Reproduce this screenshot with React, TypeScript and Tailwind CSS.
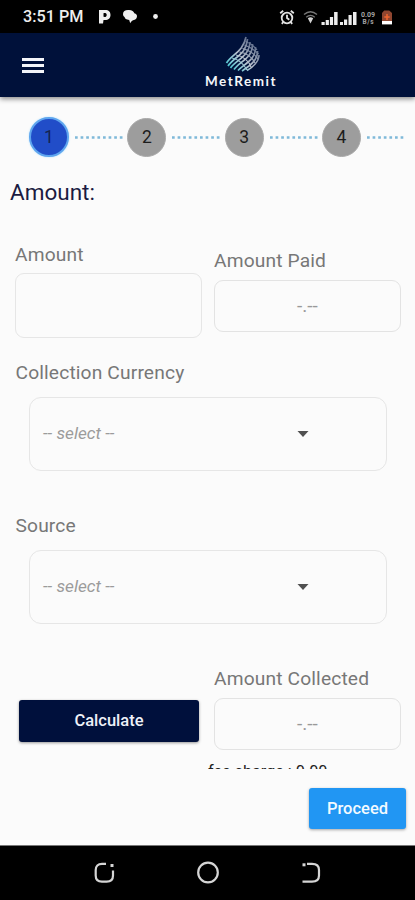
import React from "react";

const steps = [1, 2, 3, 4];

const StatusBar: React.FC = () => {
  return (
    <div className="h-[33px] shrink-0 bg-black text-[#eeeeee] flex items-center justify-between pl-[23px] pr-[21px]">
      <div className="flex items-center">
        <span className="w-[62px] mt-[2px] text-[16.200px] leading-none font-medium whitespace-nowrap">3:51 PM</span>
        <svg width="76" height="18" viewBox="0 0 76 18" className="ml-[11px] mt-px" fill="#f0f0f0">
          <path fillRule="evenodd" d="M3 2h6c4 0 5.500 2 5.500 5s-2 5-5.500 5H7.500l-.5 3.500H3zM7.500 5.200v3.600c2 .4 3.200-.3 3.200-1.900s-1.300-2-3.200-1.700z" />
          <path d="M27 6c0-2.500 2-4 5-4h1c3 0 4.800 1.400 5.300 3.200 2 .5 2.700 1.500 2.700 3 0 2-1.300 3.300-3 3.800-1.600.4-2.500 1-3.800 3.300l-1-3.300C30 11.500 29 10.500 28.700 9.200 27.700 8.500 27 7.500 27 6z" />
          <circle cx="59.500" cy="8.500" r="2.400" />
        </svg>
      </div>
      <svg width="116" height="20" viewBox="0 0 116 20" className="mt-[2px]">
        {/* alarm */}
        <g fill="none" stroke="#e4e4e4" strokeWidth="1.800">
          <circle cx="9" cy="10" r="5.300" />
          <path d="M9 6.800V10l2.300 1.800M2.200 5.300l3-2.600M12.800 2.700l3 2.600M5.200 14.200l-1.400 1.600M12.800 14.200l1.400 1.600" />
        </g>
        {/* wifi */}
        <g fill="none" stroke="#777777" strokeWidth="1.300">
          <path d="M26 6.600c4-3.500 9-3.500 13 0M28.200 9.200c2.700-2.300 5.900-2.300 8.600 0" />
        </g>
        <path d="M29.800 10.300c1.800-1.400 3.600-1.400 5.400 0L32.500 15.600z" fill="#d2d2d2" />
        {/* both sims */}
        <g fill="#ededed">
          <path d="M43.500 14h3.200v3h-3.200zM47.700 12h3.200v5h-3.200zM51.900 9h3.200v8h-3.200zM56.100 4h3.500v13h-3.500z" />
          <path d="M62 14h3v3h-3zM66 11.500h3.200V17H66zM70.500 7h3.200v10h-3.200zM75 4h3.500v13H75z" />
        </g>
        <text x="83" y="8.500" fill="#a5a5a5" fontSize="7" fontWeight="700" textLength="14">0.09</text>
        <text x="84.500" y="16" fill="#a5a5a5" fontSize="6.500" fontWeight="700" textLength="11">B/s</text>
        {/* battery */}
        <path d="M106.200 2.600h5l2.800 2.500v11h-10v-11z" fill="#8f4630" />
        <path d="M104 13h10v3.400h-10z" fill="#ffffff" />
        <path d="M109 6v6M106.300 9h5.400" stroke="#f0652f" strokeWidth="1.500" />
      </svg>
    </div>
  );
};

const Logo: React.FC = () => {
  return (
    <div className="w-[76px] flex flex-col items-center">
      <svg width="36" height="38" viewBox="0 0 36 38" fill="none" className="ml-[3px]">
        <defs>
          <linearGradient id="mesh" x1="2" y1="34" x2="28" y2="8" gradientUnits="userSpaceOnUse">
            <stop offset="0" stopColor="#35c5ce" />
            <stop offset="0.250" stopColor="#7fc9d5" />
            <stop offset="0.500" stopColor="#b9c2cf" />
            <stop offset="1" stopColor="#5f6d8b" />
          </linearGradient>
        </defs>
        <g stroke="url(#mesh)">
          <path strokeWidth="1.700" d="M1.500 28C7 19 18 17 21 2M3 31C10 21 21 20 22.500 4M5.500 33C12 24 24 22 25 7M9 34.500C15 26 28 23 27.500 9M13 35.500C19 29 31 25 30.500 12M17 36C23 32 33 26 32.500 16M22 35.500C28 32 34 26 34 20" />
          <path strokeWidth="1.200" d="M7 23C13 24 19 29 22 35M11 20C18 21 24 26 26 32M14.500 17C21 18 27 22 30 28M17.500 13.500C23 15 29 18 33 24M19.500 10C25 12 30 15 33.500 19M20.500 6.500C25 8 29 11 32 15" />
        </g>
      </svg>
      <span className="mt-[1px] font-[Lato] text-[13.500px] leading-[14px] font-bold tracking-[1.500px] text-[#f4f7fa] whitespace-nowrap">
        MetRemit
      </span>
    </div>
  );
};

const Header: React.FC = () => {
  return (
    <header className="relative z-10 h-16 shrink-0 bg-[#00113a] shadow-[0_2px_5px_rgba(0,0,0,0.45)] flex items-start">
      <button className="mt-[25px] ml-[22px] w-[22px] flex flex-col gap-[3px]" aria-label="menu">
        <span className="block h-[3px] w-full bg-[#f3f5f9]" />
        <span className="block h-[3px] w-full bg-[#f3f5f9]" />
        <span className="block h-[3px] w-full bg-[#f3f5f9]" />
      </button>
      <div className="ml-[159px] mt-[2px]">
        <Logo />
      </div>
    </header>
  );
};

const Stepper: React.FC = () => {
  return (
    <div className="flex items-center pt-5 pl-[29px] h-[60px]">
      {steps.map((step) => (
        <div key={step} className="flex items-center w-[97.300px] shrink-0 last:w-[83px]">
          <div
            className={
              step === 1
                ? "size-10 shrink-0 rounded-full bg-[#214dc8] border-2 border-[#5ea5ee] shadow-[0_0_2px_#a9dcff] flex items-center justify-center text-[17.500px] text-[#15234f]"
                : "size-[39px] ml-px shrink-0 rounded-full bg-[#9d9d9d] border border-[#aaaaaa] flex items-center justify-center text-[17.500px] text-[#1c1c1c]"
            }
          >
            {step}
          </div>
          <svg className="ml-1.5 h-[3px] w-[50px]">
            <line x1="0" y1="1.500" x2={step === 4 ? 39 : 50} y2="1.500" stroke="#7fb9d9" strokeWidth="2.600" strokeDasharray="2.700 2.900" />
          </svg>
        </div>
      ))}
    </div>
  );
};

const Label: React.FC<{ text: string }> = ({ text }) => (
  <label className="block text-[19.200px] leading-6 tracking-[0.150px] text-[#777777] whitespace-nowrap">{text}</label>
);

const ResultBox: React.FC = () => (
  <div className="h-[52px] w-[187px] rounded-[9px] border border-[#e3e3e3] flex items-center justify-center text-[19px] text-[#999999]">
    -.--
  </div>
);

const SelectBox: React.FC = () => (
  <div className="ml-[29px] w-[358px] h-[74px] rounded-[12px] border-[1.500px] border-[#e6e6e6] flex items-center justify-between pl-[13px] pr-[77px]">
    <span className="text-[17.200px] italic text-[#9b9b9b]">-- select --</span>
    <svg width="12" height="6" viewBox="0 0 12 6">
      <path d="M0.500 0h11L6 6z" fill="#505050" />
    </svg>
  </div>
);

const NavBar: React.FC = () => {
  return (
    <nav className="h-[55px] shrink-0 bg-black border-t border-[#777777] flex items-center justify-center">
      <svg width="228" height="26" viewBox="0 0 228 26" fill="none" stroke="#d5d5d5" strokeWidth="2.200">
        <path d="M12 3.800H8c-4 0-6.300 2.300-6.300 6.200v5.500c0 4 2.300 6.200 6.300 6.200h4.700c4 0 6.300-2.200 6.300-6.200v-5" />
        <path d="M16.500 5.500h3" strokeWidth="3" />
        <circle cx="114" cy="12.500" r="9.800" />
        <path d="M213 3.800h5c4.500 0 7 2.200 7 6.200v5.500c0 4-2.500 6.200-7 6.200h-9.500" />
        <path d="M208.500 4.800h3" strokeWidth="3" />
      </svg>
    </nav>
  );
};

const App: React.FC = () => {
  return (
    <div className="w-[415px] h-[900px] overflow-hidden flex flex-col bg-[#fbfbfb] font-[Roboto,sans-serif]">
      <StatusBar />
      <Header />

      <main className="h-[672px] shrink-0 overflow-hidden">
        <Stepper />
        <h1 className="mt-[21px] ml-2.5 text-[22.500px] leading-7 text-[#1b1b42]">Amount:</h1>

        <div className="mt-[37px] pl-[15px] flex">
          <div className="w-[199px]">
            <Label text="Amount" />
            <input type="text" className="mt-[6px] block w-[187px] h-[65px] px-3 rounded-[9px] border-[1.500px] border-[#e6e6e6] outline-none" />
          </div>
          <div className="pt-[6px]">
            <Label text="Amount Paid" />
            <div className="mt-[7px]">
              <ResultBox />
            </div>
          </div>
        </div>

        <div className="mt-[23px]">
          <div className="ml-[15.500px]">
            <Label text="Collection Currency" />
          </div>
          <div className="mt-[12px]">
            <SelectBox />
          </div>
        </div>

        <div className="mt-[43px]">
          <div className="ml-[15.500px]">
            <Label text="Source" />
          </div>
          <div className="mt-[12px]">
            <SelectBox />
          </div>
        </div>

        <div className="mt-[43px] pl-[19px] flex items-start">
          <button className="mt-[33px] mr-[15px] w-[180px] h-[42px] shrink-0 rounded-[3px] bg-[#00103c] text-[#eef1f8] text-[16.500px] font-medium shadow-[0_1px_3px_rgba(0,0,0,0.4)]">
            Calculate
          </button>
          <div>
            <Label text="Amount Collected" />
            <div className="mt-[7px]">
              <ResultBox />
            </div>
          </div>
        </div>
        <p className="mt-[12px] ml-[208px] text-[16.200px] leading-5 text-[#222222] whitespace-nowrap">fee charge : 0.00</p>
      </main>

      <footer className="flex-1 flex justify-end items-start pt-[19px] pr-[9px]">
        <button className="w-[97px] h-[41px] pt-px rounded-[3px] bg-[#2196f3] text-[#f3faff] text-[16.500px] font-medium shadow-[0_1px_3px_rgba(0,0,0,0.35)]">
          Proceed
        </button>
      </footer>
      <NavBar />
    </div>
  );
};

export default App;
